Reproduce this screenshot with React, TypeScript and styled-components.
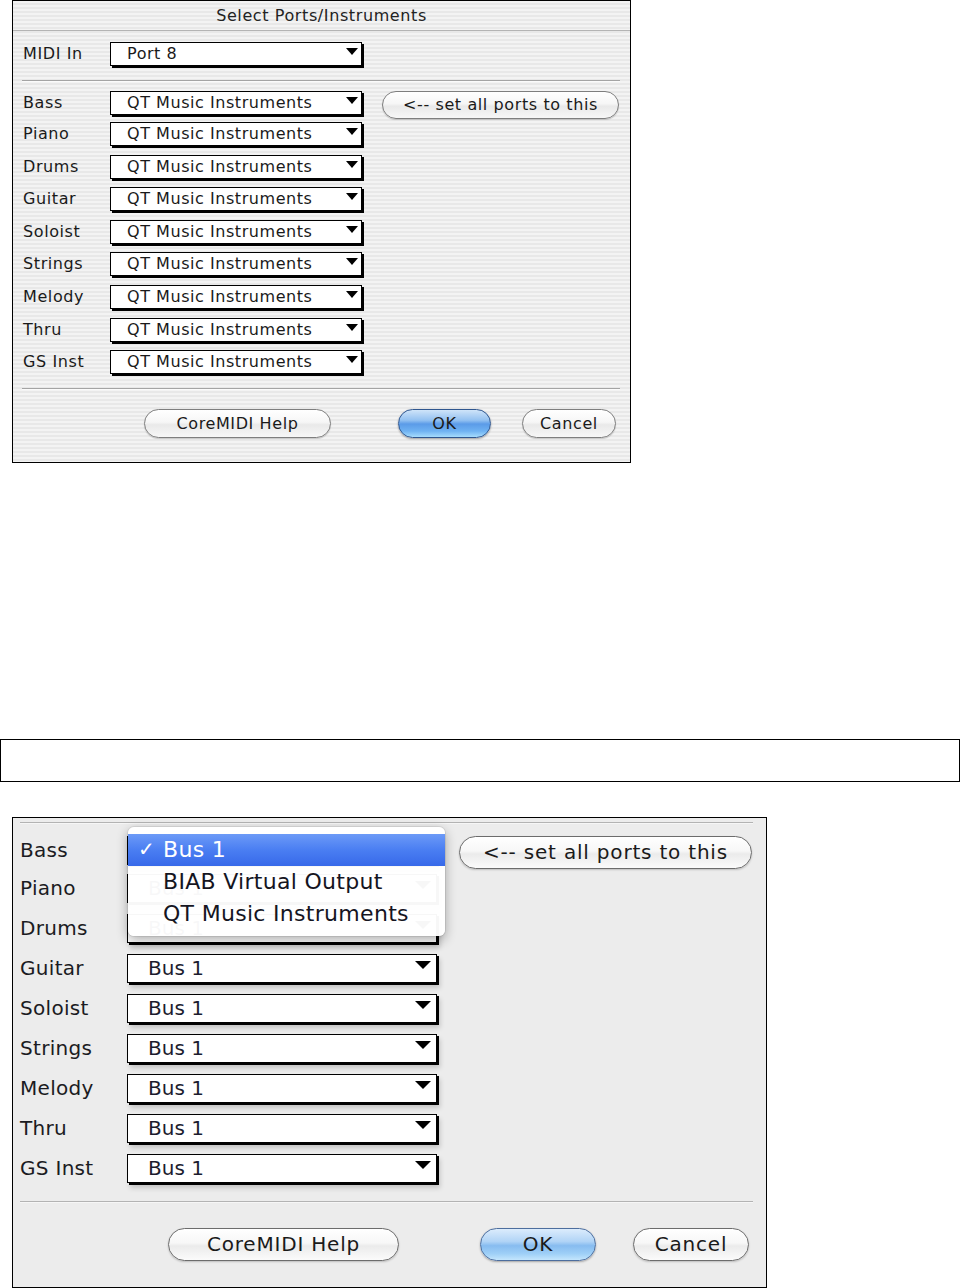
import React from 'react';
import styled, { createGlobalStyle, css } from 'styled-components';

type V = 'classic' | 'leopard';

const M = {
  classic: {
    font: 16, labelW: 88, popW: 254, popH: 26, popPadL: 16, popPadR: 3,
    rowGap: 6.6, setGap: 18, setW: 237, setH: 28, btnH: 29,
    triW: 13, triH: 7, labelLs: 0.6, btnLs: 0.6, popLs: 0.55,
  },
  leopard: {
    font: 20, labelW: 107, popW: 312, popH: 31, popPadL: 20, popPadR: 5,
    rowGap: 9, setGap: 20, setW: 293, setH: 33, btnH: 33,
    triW: 16, triH: 8, labelLs: 0.3, btnLs: 0.8, popLs: 0,
  },
};

const Global = createGlobalStyle`
  html, body { margin: 0; padding: 0; background: #fff; }
  body { font-family: "DejaVu Sans", "Liberation Sans", sans-serif; }
  * { box-sizing: border-box; }
`;

const Page = styled.div`
  display: flex;
  flex-direction: column;
  width: 960px;
`;

const Window = styled.div<{ $v: V }>`
  position: relative;
  margin-left: 12px;
  border: 1px solid #000;
  display: flex;
  flex-direction: column;
  color: #111;
  ${(p) =>
    p.$v === 'classic'
      ? css`
          width: 619px;
          background: repeating-linear-gradient(
            to bottom,
            #f3f3f3 0px,
            #f3f3f3 2px,
            #e8e8e8 2px,
            #e8e8e8 4px
          );
        `
      : css`
          width: 755px;
          margin-top: 35px;
          background: #ececec;
        `}
`;

const TitleBar = styled.div`
  height: 30px;
  border-bottom: 1px solid #b4b4b4;
  display: flex;
  align-items: center;
  justify-content: center;
  font-size: 16px;
  letter-spacing: 0.6px;
  color: #222;
  padding-bottom: 1px;
`;

const Body = styled.div<{ $v: V }>`
  display: flex;
  flex-direction: column;
  ${(p) =>
    p.$v === 'classic'
      ? css`
          padding: 11px 10px 24px 9px;
        `
      : css`
          padding: 4px 13px 26px 7px;
        `}
`;

const Separator = styled.div<{ $v: V; $top: number; $bottom: number }>`
  height: 1px;
  margin-top: ${(p) => p.$top}px;
  margin-bottom: ${(p) => p.$bottom}px;
  background: ${(p) => (p.$v === 'classic' ? '#a4a4a4' : '#b3b3b3')};
  box-shadow: 0 1px 0 ${(p) => (p.$v === 'classic' ? '#fbfbfb' : '#f6f6f6')};
`;

const Rows = styled.div<{ $v: V }>`
  display: flex;
  flex-direction: column;
  gap: ${(p) => M[p.$v].rowGap}px;
`;

const Row = styled.div<{ $v: V }>`
  display: grid;
  grid-template-columns: ${(p) => M[p.$v].labelW}px ${(p) => M[p.$v].popW}px auto;
  align-items: center;
  height: ${(p) => M[p.$v].popH}px;
`;

const Label = styled.div<{ $v: V }>`
  font-size: ${(p) => M[p.$v].font}px;
  letter-spacing: ${(p) => M[p.$v].labelLs}px;
  color: ${(p) => (p.$v === 'classic' ? '#1a1a1a' : '#1b1b22')};
  padding-left: ${(p) => (p.$v === 'classic' ? 1 : 0)}px;
  padding-bottom: ${(p) => (p.$v === 'classic' ? 3 : 3)}px;
  white-space: nowrap;
`;

const Popup = styled.div<{ $v: V }>`
  display: flex;
  align-items: center;
  justify-content: space-between;
  height: ${(p) => M[p.$v].popH - 2}px;
  margin-bottom: 2px;
  width: ${(p) => M[p.$v].popW - 2}px;
  padding: 0 ${(p) => M[p.$v].popPadR}px 1px ${(p) => M[p.$v].popPadL}px;
  background: #fff;
  border: 1px solid #000;
  font-size: ${(p) => M[p.$v].font}px;
  letter-spacing: ${(p) => M[p.$v].popLs}px;
  color: ${(p) => (p.$v === 'classic' ? '#1a1a1a' : '#1c1c2e')};
  white-space: nowrap;
  ${(p) =>
    p.$v === 'classic'
      ? css`
          box-shadow: 2px 2px 0 #000;
        `
      : css`
          box-shadow: 2px 2px 0 #000, 3px 5px 5px rgba(0, 0, 0, 0.18);
        `}
`;

const Triangle = styled.span<{ $v: V }>`
  width: 0;
  height: 0;
  border-left: ${(p) => M[p.$v].triW / 2}px solid transparent;
  border-right: ${(p) => M[p.$v].triW / 2}px solid transparent;
  border-top: ${(p) => M[p.$v].triH}px solid #000;
  margin-bottom: ${(p) => (p.$v === 'classic' ? 4 : 6)}px;
`;

const AquaButton = styled.button<{ $v: V; $primary?: boolean; $w: number }>`
  width: ${(p) => p.$w}px;
  height: ${(p) => M[p.$v].btnH}px;
  border-radius: 999px;
  font-family: "DejaVu Sans", "Liberation Sans", sans-serif;
  font-size: ${(p) => M[p.$v].font}px;
  letter-spacing: ${(p) => M[p.$v].btnLs}px;
  color: #1a1a1a;
  padding: 0 0 1px 0;
  white-space: nowrap;
  ${(p) =>
    p.$primary
      ? p.$v === 'classic'
        ? css`
            border: 1px solid #2f568f;
            background: linear-gradient(
              to bottom,
              #cfe4f9 0%,
              #93c1f1 38%,
              #5b9be8 52%,
              #6fb2f2 78%,
              #a6dcfd 100%
            );
            box-shadow: 0 1px 2px rgba(0, 0, 0, 0.35);
          `
        : css`
            border: 1px solid #4d6e9e;
            background: linear-gradient(
              to bottom,
              #dcecfc 0%,
              #b1d4f6 40%,
              #87bcf0 54%,
              #9fd0f7 80%,
              #c4e6fd 100%
            );
            box-shadow: 0 1px 2px rgba(0, 0, 0, 0.3);
          `
      : p.$v === 'classic'
      ? css`
          border: 1px solid #7e7e7e;
          background: linear-gradient(
            to bottom,
            #ffffff 0%,
            #f6f6f6 45%,
            #e9e9e9 55%,
            #f7f7f7 100%
          );
          box-shadow: 0 1px 1px rgba(0, 0, 0, 0.18);
        `
      : css`
          border: 1px solid #6c6c6c;
          background: linear-gradient(
            to bottom,
            #ffffff 0%,
            #f7f7f7 45%,
            #ebebeb 55%,
            #fbfbfb 100%
          );
          box-shadow: 0 1px 2px rgba(0, 0, 0, 0.2);
        `}
`;

const SetAllButton = styled(AquaButton)`
  height: ${(p) => M[p.$v].setH}px;
  margin-left: ${(p) => M[p.$v].setGap}px;
  margin-top: ${(p) => (p.$v === 'classic' ? 1 : 2)}px;
`;

const ButtonBar = styled.div<{ $v: V }>`
  display: flex;
  align-items: center;
  ${(p) =>
    p.$v === 'classic'
      ? css`
          padding-left: 122px;
          gap: 31px;
        `
      : css`
          padding-left: 148px;
          gap: 37px;
        `}
`;

const HelpButton = styled(AquaButton)`
  margin-right: ${(p) => (p.$v === 'classic' ? 36 : 44)}px;
`;

const EmptyBox = styled.div`
  margin-top: 276px;
  width: 960px;
  height: 43px;
  border: 1.5px solid #000;
`;

const Menu = styled.div`
  position: absolute;
  left: 115px;
  top: 9px;
  width: 317px;
  padding: 7px 0 6px;
  background: rgba(255, 255, 255, 0.97);
  border-radius: 6px;
  box-shadow: 0 4px 12px rgba(0, 0, 0, 0.32), 0 0 0 1px rgba(0, 0, 0, 0.07);
  z-index: 2;
`;

const MenuItem = styled.div<{ $active?: boolean }>`
  display: flex;
  align-items: center;
  height: 32px;
  padding-left: 10px;
  padding-bottom: 2px;
  font-size: 22px;
  letter-spacing: 0.3px;
  white-space: nowrap;
  color: ${(p) => (p.$active ? '#fff' : '#15151f')};
  background: ${(p) =>
    p.$active ? 'linear-gradient(to bottom, #6c9af7 0%, #4a7ef2 50%, #3769e9 100%)' : 'transparent'};
`;

const Check = styled.span`
  display: inline-block;
  width: 25px;
  font-size: 20px;
`;

const instruments = ['Bass', 'Piano', 'Drums', 'Guitar', 'Soloist', 'Strings', 'Melody', 'Thru', 'GS Inst'];

function PortRows({ v, value }: { v: V; value: string }) {
  return (
    <Rows $v={v}>
      {instruments.map((name, i) => (
        <Row $v={v} key={name}>
          <Label $v={v}>{name}</Label>
          <Popup $v={v}>
            <span>{value}</span>
            <Triangle $v={v} />
          </Popup>
          {i === 0 && (
            <SetAllButton $v={v} $w={M[v].setW}>
              &lt;-- set all ports to this
            </SetAllButton>
          )}
        </Row>
      ))}
    </Rows>
  );
}

function Buttons({ v }: { v: V }) {
  const c = v === 'classic';
  return (
    <ButtonBar $v={v}>
      <HelpButton $v={v} $w={c ? 187 : 231}>
        CoreMIDI Help
      </HelpButton>
      <AquaButton $v={v} $primary $w={c ? 93 : 116}>
        OK
      </AquaButton>
      <AquaButton $v={v} $w={c ? 94 : 116}>
        Cancel
      </AquaButton>
    </ButtonBar>
  );
}

export default function App() {
  return (
    <Page>
      <Global />
      <Window $v="classic">
        <TitleBar>Select Ports/Instruments</TitleBar>
        <Body $v="classic">
          <Row $v="classic">
            <Label $v="classic">MIDI In</Label>
            <Popup $v="classic">
              <span>Port 8</span>
              <Triangle $v="classic" />
            </Popup>
          </Row>
          <Separator $v="classic" $top={12} $bottom={8.5} />
          <PortRows v="classic" value="QT Music Instruments" />
          <Separator $v="classic" $top={12} $bottom={20} />
          <Buttons v="classic" />
        </Body>
      </Window>

      <EmptyBox />

      <Window $v="leopard">
        <Body $v="leopard">
          <Separator $v="leopard" $top={0} $bottom={11} />
          <PortRows v="leopard" value="Bus 1" />
          <Separator $v="leopard" $top={16} $bottom={26} />
          <Buttons v="leopard" />
        </Body>
        <Menu>
          <MenuItem $active>
            <Check>✓</Check>Bus 1
          </MenuItem>
          <MenuItem>
            <Check />BIAB Virtual Output
          </MenuItem>
          <MenuItem>
            <Check />QT Music Instruments
          </MenuItem>
        </Menu>
      </Window>
    </Page>
  );
}
